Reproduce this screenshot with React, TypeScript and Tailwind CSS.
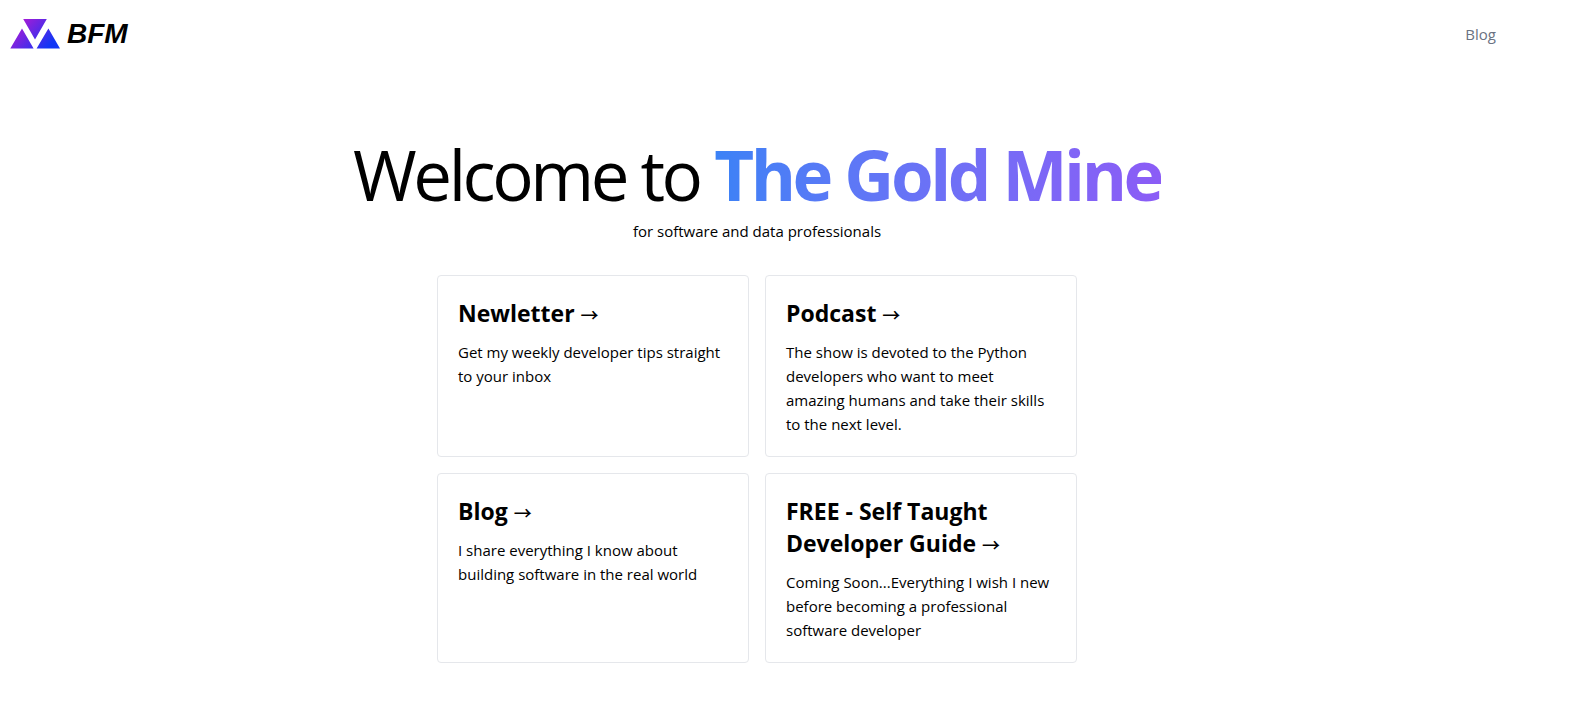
const cards = [
  { title: "Newletter", text: "Get my weekly developer tips straight to your inbox" },
  {
    title: "Podcast",
    text: "The show is devoted to the Python developers who want to meet amazing humans and take their skills to the next level.",
  },
  { title: "Blog", text: "I share everything I know about building software in the real world" },
  {
    title: "FREE - Self Taught Developer Guide",
    text: "Coming Soon...Everything I wish I new before becoming a professional software developer",
  },
];

function LogoMark() {
  return (
    <svg width="50" height="30" viewBox="0 0 50 30" aria-hidden="true">
      <defs>
        <linearGradient id="mark" gradientUnits="userSpaceOnUse" x1="8" y1="4" x2="36" y2="30">
          <stop offset="0" stopColor="#a91bd6" />
          <stop offset="1" stopColor="#1236f5" />
        </linearGradient>
      </defs>
      <path fill="url(#mark)" d="M13.2 0H36.8L25 20.6ZM12 9.4L23.6 29.5H0.3ZM38.4 9.4L50 29.5H26.6Z" />
    </svg>
  );
}

export default function App() {
  return (
    <div className="min-h-screen bg-white font-['Open_Sans','Noto_Sans',sans-serif] text-black">
      <header className="flex items-center justify-between pt-4 pr-[74px] pl-[10px]">
        <a href="#" className="flex items-center gap-[7px]">
          <LogoMark />
          <span className="font-['Liberation_Sans',Arial,sans-serif] text-[28px] leading-9 font-bold italic">
            BFM
          </span>
        </a>
        <nav>
          <a href="#blog" className="text-[15px] leading-6 text-gray-500">
            Blog
          </a>
        </nav>
      </header>
      <main className="flex flex-col items-center pt-[86px] pr-14 pb-11">
        <h1 className="text-center text-[69px] leading-[72px] tracking-tighter">
          Welcome to{" "}
          <span className="bg-gradient-to-r from-[#3b82f6] to-[#8b5cf6] bg-clip-text font-bold text-transparent">
            The Gold Mine
          </span>
        </h1>
        <p className="mt-[9px] text-[15px] leading-6">for software and data professionals</p>
        <div className="mt-8 grid w-full max-w-[640px] grid-cols-2 gap-4">
          {cards.map((card) => (
            <a key={card.title} href="#" className="rounded-sm border border-gray-200 px-5 pt-[21px] pb-5">
              <h2 className="text-[23px] leading-8 font-bold">
                {card.title}{" "}
                <span className="font-['Noto_Sans_CJK_JP',sans-serif] text-lg leading-none font-medium">→</span>
              </h2>
              <p className="mt-[11px] text-[15px] leading-6">{card.text}</p>
            </a>
          ))}
        </div>
      </main>
    </div>
  );
}
